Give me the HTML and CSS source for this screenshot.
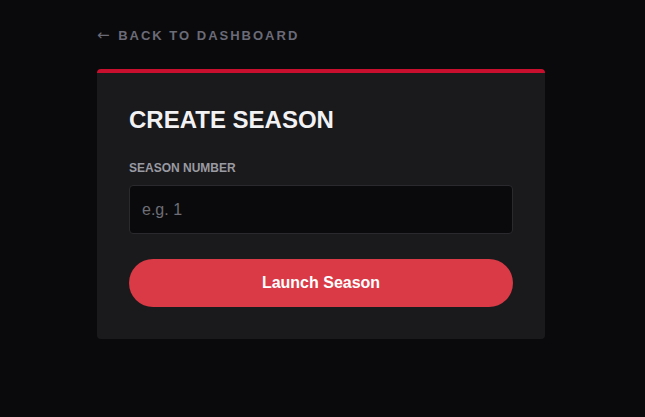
FILE: index.html
```html
<!DOCTYPE html>
<html>
<head>
<meta charset="utf-8">
<link rel="stylesheet" href="styles.css">
</head>
<body>
<div class="page">
  <a class="back" href="#"><span class="arrow">←</span> BACK TO DASHBOARD</a>
  <div class="card">
    <h1 class="title">CREATE SEASON</h1>
    <label class="label">SEASON NUMBER</label>
    <input class="input" type="text" placeholder="e.g. 1">
    <button class="btn">Launch Season</button>
  </div>
</div>
</body>
</html>
```
FILE: styles.css
```css
html, body {
  margin: 0;
  padding: 0;
  background: #0a0a0c;
  font-family: "Liberation Sans", Arial, sans-serif;
}
.page {
  width: 448px;
  margin-left: 97px;
  padding-top: 27px;
  display: flex;
  flex-direction: column;
}
.back {
  color: #6b6b78;
  font-size: 13px;
  font-weight: bold;
  letter-spacing: 2px;
  text-decoration: none;
  line-height: 16px;
  margin-bottom: 25px;
}
.arrow {
  font-family: "DejaVu Sans", sans-serif;
  font-weight: normal;
  font-size: 15px;
  letter-spacing: 0;
  margin-right: 3px;
}
.card {
  background: #1a1a1c;
  border-top: 4px solid #c8102e;
  border-radius: 4px;
  padding: 32px 32px 32px;
  display: flex;
  flex-direction: column;
}
.title {
  margin: 0;
  color: #f2f2f4;
  font-size: 24px;
  font-weight: bold;
  line-height: 30px;
  margin-bottom: 26px;
}
.label {
  color: #9a9aa2;
  font-size: 12px;
  font-weight: bold;
  line-height: 15px;
  margin-bottom: 9px;
}
.input {
  box-sizing: border-box;
  height: 49px;
  background: #0a0a0c;
  border: 1px solid #2a2a2e;
  border-radius: 4px;
  padding: 0 12px;
  font-family: "Liberation Sans", Arial, sans-serif;
  font-size: 16px;
  color: #ddd;
  outline: none;
  margin-bottom: 25px;
}
.input::placeholder {
  color: #6e6e76;
}
.btn {
  height: 48px;
  border: none;
  border-radius: 24px;
  background: #d93a46;
  color: #fff;
  font-family: "Liberation Sans", Arial, sans-serif;
  font-size: 16px;
  font-weight: bold;
}
```
